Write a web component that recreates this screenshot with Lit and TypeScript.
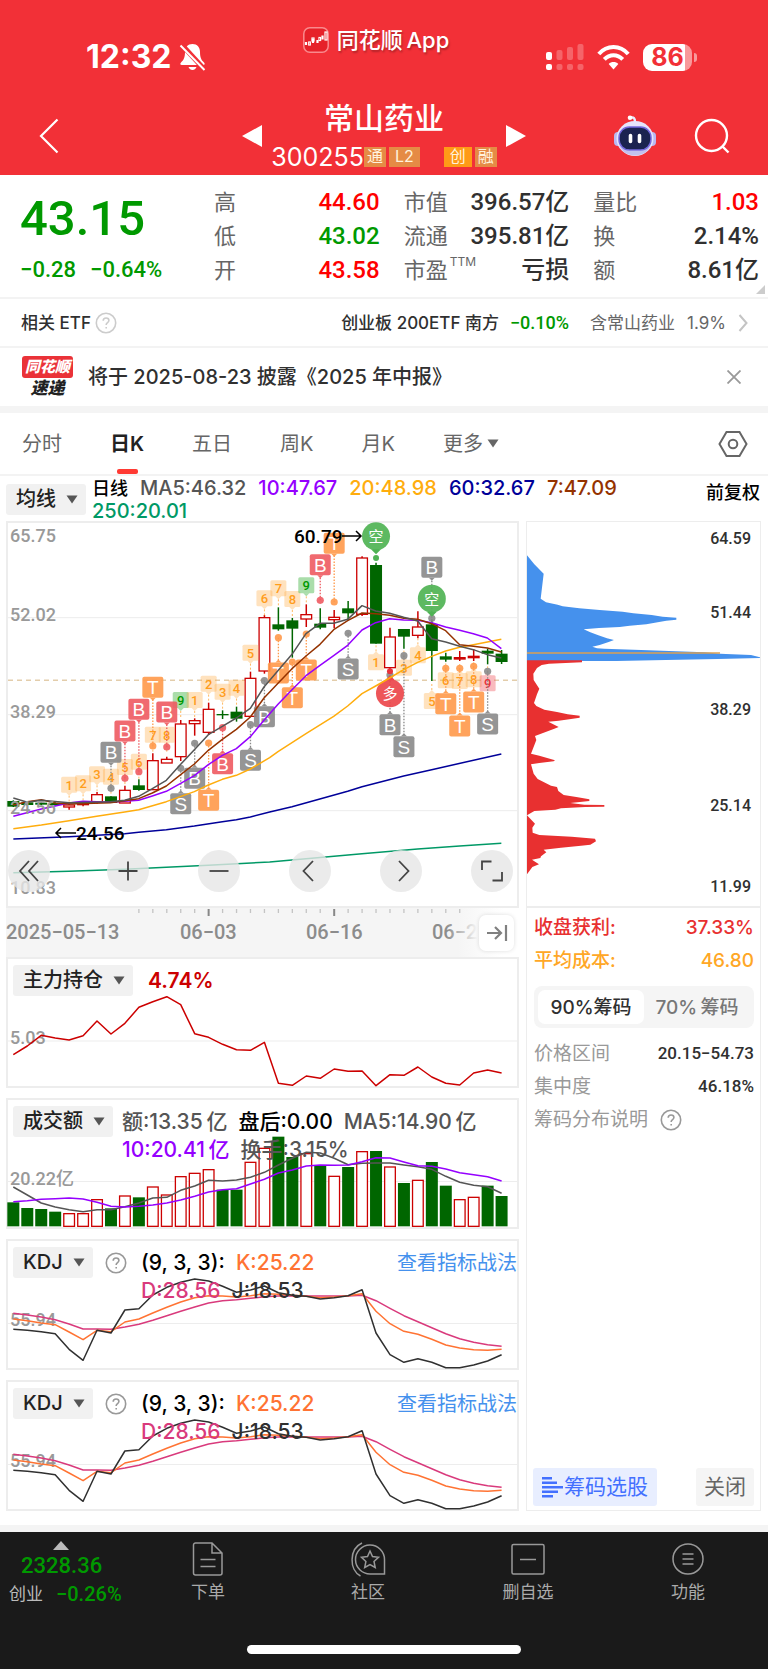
import { LitElement, html, svg, css } from "lit";
import { customElement, state } from "lit/decorators.js";
import { classMap } from "lit/directives/class-map.js";

/* Chart geometry is kept in thirds of a pixel and divided by UNIT when drawn. */
const UNIT = 3;
const STEP = 41.85;
const FIRST = 41;
const CX = (i: number) => FIRST + STEP * i;
const LEFT = 19;
const TOP = 20;

type Candle = [up: number, high: number, top: number, bottom: number, low: number];
const CANDLES: Candle[] = [
  [0, 858, 860, 877, 878], [0, 862, 864, 872, 874], [0, 864, 865, 871, 873], [0, 864, 866, 872, 874],
  [1, 869, 872, 878, 886], [1, 862, 867, 871, 876], [1, 833, 841, 864, 868], [0, 846, 846, 866, 866],
  [1, 814, 828, 866, 866], [0, 795, 813, 827, 829], [1, 717, 739, 826, 826], [1, 727, 735, 746, 746],
  [1, 617, 629, 727, 740], [1, 612, 619, 628, 664], [1, 565, 585, 654, 662], [0, 588, 599, 603, 614],
  [0, 577, 592, 613, 622], [1, 472, 492, 606, 608], [1, 302, 310, 470, 478], [0, 279, 330, 345, 349],
  [0, 311, 318, 343, 430], [1, 270, 301, 314, 338], [0, 282, 328, 340, 345], [1, 287, 309, 316, 342],
  [0, 260, 282, 297, 318], [1, 126, 131, 300, 305], [0, 145, 152, 388, 388], [1, 340, 368, 460, 468],
  [0, 344, 344, 367, 403], [1, 291, 338, 363, 372], [0, 315, 330, 410, 500], [0, 415, 426, 436, 442],
  [1, 410, 430, 434, 440], [1, 405, 426, 430, 440], [0, 403, 409, 418, 450], [0, 407, 418, 443, 449],
];

const LINES: [string, string][] = [
  ["ma250", "41,1075 208,1071 375,1065 500,1059 626,1053 810,1043 919,1033 1087,1018 1254,1004 1380,995 1505,987"],
  ["ma60", "41,974 208,967 375,958 417,954 500,946 584,935 668,922 710,916 752,908 810,893 877,877 1044,831 1087,817 1212,785 1296,766 1505,719"],
  ["ma20", "41,943 125,932 208,919 291,906 375,893 417,886 500,862 584,832 626,812 668,795 710,783 752,764 810,730 835,712 919,658 1002,606 1044,575 1087,538 1128,515 1170,491 1212,466 1254,444 1296,426 1338,410 1380,399 1421,391 1463,383 1505,375"],
  ["ma10", "41,906 125,884 208,866 250,861 332,864 417,858 458,845 500,831 543,807 584,784 626,751 668,723 710,703 752,667 793,618 835,570 877,526 919,484 961,453 1002,424 1044,393 1087,347 1128,325 1170,313 1212,317 1254,318 1296,325 1338,338 1380,348 1421,358 1463,371 1505,403"],
  ["ma7", "41,872 83,862 125,856 167,866 208,869 332,865 417,853 458,836 500,815 543,781 584,749 626,708 668,675 710,645 752,608 793,551 835,507 877,463 919,425 961,390 1002,346 1044,319 1087,296 1128,298 1170,303 1212,312 1254,315 1296,328 1338,349 1380,391 1421,396 1463,401 1505,413"],
  ["ma5", "41,851 83,864 125,858 208,865 332,862 375,858 417,846 458,823 500,798 543,750 584,706 626,661 668,636 710,611 752,582 793,518 877,420 919,358 961,327 1002,327 1044,315 1087,274 1128,290 1170,297 1212,309 1254,320 1296,373 1338,383 1380,396 1421,406 1463,421 1505,431"],
];

type Count = [i: number, y: number, n: string, tone: string, below?: boolean];
const COUNTS: Count[] = [
  [4, 811, "1", "o"], [5, 807, "2", "o"], [6, 780, "3", "o"], [7, 787, "4", "o"], [8, 758, "5", "o"],
  [9, 742, "6", "o"], [10, 661, "7", "o"], [11, 661, "8", "o"], [12, 557, "9", "g"], [13, 557, "1", "o"],
  [14, 508, "2", "o"], [15, 532, "3", "o"], [16, 520, "4", "o"], [17, 415, "5", "o"], [18, 252, "6", "o"],
  [19, 222, "7", "o"], [20, 254, "8", "o"], [21, 213, "9", "g"], [26, 444, "1", "o", true],
  [28, 460, "3", "o", true], [29, 423, "4", "o", true], [30, 560, "5", "o", true], [31, 498, "6", "o", true],
  [32, 500, "7", "o", true], [33, 495, "8", "o", true], [34, 507, "9", "r", true],
];

type Signal = [i: number, dot: number, y: number, letter: string, tone: string];
const SIGNALS: Signal[] = [
  [7, 822, 714, "B", "gray"], [8, 792, 650, "B", "red"], [9, 772, 585, "B", "red"], [10, 695, 519, "T", "orange"],
  [11, 698, 593, "B", "red"], [12, 762, 868, "S", "gray"], [13, 687, 792, "B", "gray"], [14, 686, 858, "T", "orange"],
  [15, 640, 748, "B", "red"], [17, 631, 738, "S", "gray"], [18, 499, 607, "B", "gray"], [19, 370, 476, "T", "orange"],
  [20, 443, 550, "T", "orange"], [21, 359, 467, "T", "orange"], [22, 258, 151, "B", "red"], [23, 263, 87, "T", "orange"],
  [24, 357, 464, "S", "gray"], [27, 482, 631, "B", "gray"], [28, 424, 697, "S", "gray"], [30, 312, 159, "B", "gray"],
  [31, 462, 568, "T", "orange"], [32, 462, 635, "T", "orange"], [33, 456, 563, "T", "orange"], [34, 471, 629, "S", "gray"],
];

const HOLDING = [465, 439, 407, 415, 421, 408, 364, 403, 371, 323, 306, 291, 315, 402, 413, 434, 450, 452, 428, 551, 557, 529, 536, 508, 515, 514, 558, 525, 527, 502, 532, 551, 556, 520, 511, 520];
const VOLUME = [340, 357, 360, 368, 374, 374, 332, 358, 321, 325, 294, 318, 263, 253, 242, 302, 302, 220, 178, 143, 204, 194, 229, 262, 234, 188, 186, 234, 282, 274, 219, 290, 332, 325, 290, 321];
const VOLUME_UP = [0, 0, 0, 0, 1, 1, 1, 0, 1, 0, 1, 1, 1, 1, 1, 0, 0, 1, 1, 0, 0, 1, 0, 1, 0, 1, 0, 1, 0, 1, 0, 0, 1, 1, 0, 0];
const VOLUME_MA5 = [294, 318, 342, 354, 362, 368, 362, 362, 353, 342, 327, 325, 304, 291, 274, 276, 273, 265, 250, 228, 208, 190, 192, 208, 227, 223, 222, 222, 228, 233, 241, 262, 280, 289, 293, 313];
const VOLUME_MA10 = [338, 335, 331, 329, 327, 330, 340, 352, 354, 352, 348, 342, 333, 322, 309, 302, 299, 285, 271, 252, 243, 231, 228, 229, 228, 218, 206, 207, 219, 230, 232, 240, 251, 257, 263, 276];
const KDJ_J = [299, 302, 306, 312, 359, 392, 302, 310, 241, 237, 196, 173, 158, 148, 154, 170, 188, 181, 169, 189, 197, 200, 208, 204, 198, 180, 310, 375, 398, 387, 398, 414, 414, 406, 394, 375];
const KDJ_K = [268, 273, 280, 285, 307, 330, 302, 306, 277, 268, 250, 233, 217, 204, 198, 199, 202, 198, 192, 194, 197, 200, 204, 202, 198, 192, 245, 282, 305, 314, 329, 346, 355, 360, 362, 359];
const KDJ_D = [251, 256, 262, 270, 283, 298, 298, 299, 292, 284, 272, 258, 245, 232, 220, 213, 210, 206, 201, 199, 199, 199, 199, 199, 199, 197, 213, 236, 258, 276, 294, 312, 327, 338, 345, 350];

const STATS = [
  ["高", "44.60", "up", "市值", "396.57亿", "", "量比", "1.03", "up"],
  ["低", "43.02", "down", "流通", "395.81亿", "", "换", "2.14%", ""],
  ["开", "43.58", "up", "市盈", "亏损", "", "额", "8.61亿", ""],
];

const TABS = ["分时", "日K", "五日", "周K", "月K"];

const px = (v: number, origin: number) => (v - origin) / UNIT;
const series = (values: number[], origin: number) =>
  values.map((v, i) => `${px(CX(i), LEFT).toFixed(1)},${px(v, origin).toFixed(1)}`).join(" ");

const help = html`<svg class="help" viewBox="0 0 22 22" aria-hidden="true">
  <circle cx="11" cy="11" r="9.7"></circle>
  <path d="M8.2 8.8c0-1.700 1.200-2.800 2.900-2.800 1.600 0 2.800 1 2.800 2.500 0 2-2.700 2.100-2.700 4.200v.4M11.200 15v1.400"></path>
</svg>`;

const picker = (name: string, label: string) => html`<label class="picker">
  <select aria-label=${label}><option>${name}</option></select>
  <svg viewBox="0 0 12 9" aria-hidden="true"><path d="M.5.5h11L6 8.500z"></path></svg>
</label>`;

@customElement("app-root")
export class AppRoot extends LitElement {
  @state() private tab = 1;
  @state() private share = 0;

  static styles = css`
    :host { display: block; background: #fff; color: #303030;
      font-family: Inter, "Noto Sans CJK SC", sans-serif; font-size: 20px; line-height: 24px; }
    * { box-sizing: border-box; }
    button, select { font: inherit; color: inherit; border: 0; background: none; margin: 0; padding: 0; cursor: pointer; }
    a { color: inherit; text-decoration: none; }
    svg { display: block; }
    .num { font-family: Roboto, "Noto Sans CJK SC", sans-serif; font-weight: 500; }
    .up { color: #ff0000; }
    .down { color: #009900; }

    .head { background: #f23037; color: #fff; height: 175px; }
    .status { height: 88px; padding: 26px 16px 0 0; display: grid; grid-template-columns: 1fr auto 1fr; align-items: center; }
    .clock { display: flex; align-items: center; gap: 8px; padding-left: 86px; font-size: 32px; font-weight: 700; line-height: 36px; }
    .clock svg { width: 27px; height: 28px; }
    .source { align-self: start; display: flex; align-items: center; gap: 8px; font-size: 22px; font-weight: 500; line-height: 28px; text-shadow: 1px 2px 2px #0004; }
    .source svg { width: 26px; height: 26px; }
    .radio { display: flex; justify-content: flex-end; align-items: center; gap: 13px; padding-right: 55px; }
    .bars { width: 38px; height: 26px; }
    .wifi { width: 33px; height: 25px; }
    .battery { display: flex; align-items: center; }
    .cell { width: 49px; height: 27px; border-radius: 9px; text-align: center; color: #f23037;
      background: linear-gradient(90deg, #fff 86%, #f9989b 86%); font-size: 25px; font-weight: 700; line-height: 27px; }
    .nub { width: 3px; height: 9px; margin-left: 2px; background: #f9989b; border-radius: 0 3px 3px 0; }
    .nav { height: 87px; display: grid; grid-template-columns: 1fr auto 1fr; align-items: center; padding-top: 9px; }
    .back { justify-self: start; margin-left: 38px; }
    .back svg { width: 22px; height: 36px; }
    .name { display: flex; align-items: center; }
    .name h1 { margin: 0; font-size: 30px; line-height: 36px; font-weight: 500; text-align: center; }
    .name .tri { width: 20px; height: 22px; fill: #fff; }
    .who { width: 244px; }
    .code { display: flex; justify-content: center; align-items: center; font-size: 25px; line-height: 32px; height: 32px; margin-top: 5px; }
    .tag { height: 20px; line-height: 19px; font-size: 16px; padding: 0 6px; background: #e58b45; color: #fff2dc; margin-right: 3px; }
    .tag.cut { padding: 0 3px; }
    .tag.hot { background: #ff9a17; margin-left: 21px; }
    .tag:last-child { margin-right: 0; }
    .tools { justify-self: end; display: flex; align-items: center; gap: 38px; margin-right: 38px; }
    .robot { width: 42px; height: 42px; }
    .find { width: 36px; height: 36px; }

    .quote { display: grid; grid-template-columns: 170px 1fr 1fr 1fr; column-gap: 24px;
      position: relative; padding: 10px 9px 9px 20px; border-bottom: 2px solid #f3f3f3; height: 124px; }
    .last { font-size: 49px; line-height: 68px; }
    .diff { display: flex; gap: 14px; font-size: 22px; line-height: 34px; }
    .stat { display: flex; justify-content: space-between; font-size: 22px; line-height: 34px; color: #666; }
    .stat .num { font-size: 24px; }
    .stat .num:not(.up):not(.down) { color: #303030; }
    .stat sup { font-size: 12px; line-height: 12px; vertical-align: 12px; margin-left: 2px; }
    .fold { position: absolute; right: 3px; bottom: 3px; width: 9px; height: 9px; fill: #ccc; }

    .etf { display: flex; align-items: center; height: 49px; padding: 0 20px 0 21px; border-bottom: 2px solid #f3f3f3; font-size: 17px; font-weight: 500; }
    .help { width: 22px; height: 22px; fill: none; stroke: #999; stroke-width: 1.600; }
    .etf .help { stroke: #ccc; margin-left: 4px; }
    .etf .fund { margin-left: auto; }
    .etf .num { font-size: 18px; margin: 0 21px 0 11px; }
    .etf .has { color: #666; font-weight: 400; display: flex; align-items: center; gap: 12px; }
    .etf .has svg { width: 10px; height: 18px; }
    .news { display: flex; align-items: center; height: 58px; padding: 0 22px; gap: 15px; font-size: 20px; font-weight: 500; }
    .brand { width: 51px; font-size: 17px; font-style: italic; font-weight: 900; line-height: 20px; text-align: center; color: #222; }
    .brand b { display: block; background: #ea3238; color: #fff; font-size: 15px; line-height: 22px; border-radius: 3px; }
    .brand span { display: block; }
    .news button { margin-left: auto; margin-right: 5px; }
    .news button svg { width: 14px; height: 14px; }
    .band { height: 7px; background: #f4f4f4; }

    .tabs { display: flex; height: 63px; padding: 0 20px 0 22px; border-bottom: 2px solid #f3f3f3; color: #666; gap: 48px; }
    .tabs button { position: relative; height: 61px; display: flex; align-items: center; gap: 4px; }
    .tabs .on { color: #222; font-weight: 600; }
    .tabs .on::after { content: ""; position: absolute; left: 50%; bottom: 0; width: 21px; height: 5px; margin-left: -10px; border-radius: 2px; background: #ff3a33; }
    .tabs .more svg { width: 12px; height: 9px; fill: #666; }
    .tabs .set { margin-left: auto; }
    .tabs .set svg { width: 30px; height: 30px; }

    .legend { display: flex; padding: 0 8px 0 6px; gap: 6px; height: 45px; }
    .picker { position: relative; display: block; height: 31px; border-radius: 3px; background: #f1f1f1; flex: none; }
    .picker select { appearance: none; height: 31px; line-height: 31px; padding: 0 30px 0 10px; color: #222; outline: none; font-weight: 500; }
    .picker svg { position: absolute; right: 8px; top: 11px; width: 12px; height: 9px; fill: #555; pointer-events: none; }
    .legend .picker { margin-top: 8px; }
    .legend p { margin: 0; padding-top: 1px; flex: 1; max-width: 540px; line-height: 23px; display: flex; flex-wrap: wrap; column-gap: 12px; align-content: flex-start; font-weight: 500; }
    .legend .day { font-size: 18px; color: #000; }
    .legend .adj { font-size: 18px; font-weight: 500; color: #000; line-height: 34px; height: 34px; flex: none; margin-left: auto; }
    .c5 { color: #555; } .c10 { color: #9500ff; } .c20 { color: #ffad0d; } .c60 { color: #000099; } .c7 { color: #943200; } .c250 { color: #009966; }

    .board { display: grid; grid-template-columns: 513fr 235fr; column-gap: 7px; padding: 0 7px 0 6px; margin-bottom: 14px; }
    .main { display: flex; flex-direction: column; min-width: 0; }
    .kline { position: relative; border: 2px solid #ededed; }
    .plot { width: 100%; overflow: visible; }
    .grid { stroke: #ededed; stroke-width: 1; }
    .now { stroke: #e3cdab; stroke-width: 1.500; stroke-dasharray: 5 4; }
    .axis { font-family: Roboto, "Noto Sans CJK SC", sans-serif; font-size: 18px; font-weight: 500; fill: #999; }
    .date { font-family: Roboto, sans-serif; font-size: 20px; font-weight: 500; fill: #8c8c8c; }
    .date.last-date { fill: url(#fade); }
    .mark { font-family: Roboto, sans-serif; font-size: 19px; font-weight: 500; fill: #000; }
    .arrow { fill: none; stroke: #000; stroke-width: 1.500; }
    .redk { fill: #fff; stroke: #cc0000; stroke-width: 1.300; }
    .greenk { fill: #006600; stroke: none; }
    .wickr { stroke: #cc0000; stroke-width: 1.500; }
    .wickg { stroke: #006600; stroke-width: 1.500; }
    .ln { fill: none; stroke-width: 1.500; stroke-linejoin: round; }
    .ma5 { stroke: #555; } .ma7 { stroke: #943200; } .ma10 { stroke: #9500ff; } .ma20 { stroke: #ffad0d; } .ma60 { stroke: #000099; } .ma250 { stroke: #009966; }
    .k { stroke: #ff7333; } .d { stroke: #d93a7c; } .j { stroke: #303030; } .hold { stroke: #cc0000; }
    .count { font-family: Roboto, sans-serif; font-size: 13px; font-weight: 500; text-anchor: middle; }
    .co { fill: #ff9d1c; } .cg { fill: #009900; } .cr { fill: #e8333c; }
    .bo { fill: #ffb04a; fill-opacity: .36; } .bg { fill: #55bb55; fill-opacity: .5; } .br { fill: #f0565c; fill-opacity: .4; }
    .lead { stroke: #ffb861; stroke-dasharray: 2 2; }
    .letter { font-family: "Liberation Sans", sans-serif; font-size: 19px; fill: #fff; text-anchor: middle; }
    .hanzi { font-family: "Noto Sans CJK SC", sans-serif; font-size: 15px; fill: #fff; text-anchor: middle; }
    .gray { fill: #8a8a8a; stroke: #8a8a8a; } .red { fill: #ee5a60; stroke: #ee5a60; } .orange { fill: #ff994a; stroke: #ff994a; }
    .box, .dot { stroke: none; fill-opacity: .9; }
    .dash { fill: none; stroke-width: 1.300; stroke-dasharray: 1.500 1.500; }
    .controls { position: absolute; left: 0; right: 4px; bottom: 14px; display: flex; justify-content: space-between; }
    .controls button { width: 42px; height: 42px; border-radius: 50%; background: #e6e6e6cc; display: grid; place-items: center; }
    .controls button:first-child { margin-right: 8px; }
    .controls svg { width: 24px; height: 24px; fill: none; stroke: #444; stroke-width: 1.800; }

    .timeline { position: relative; background: linear-gradient(90deg, #f5f5f5 88%, #fff 97%); height: 49px; }
    .timeline .plot { height: 49px; }
    .timeline button { position: absolute; right: 5px; top: 7px; width: 35px; height: 36px; border-radius: 7px; background: #fff; box-shadow: 0 0 4px #0002; display: grid; place-items: center; }
    .timeline button svg { width: 22px; height: 18px; }
    .tick { stroke: #c4c4c4; stroke-width: 1.300; }
    .tick.big { stroke: #888; stroke-width: 2; }

    .panel { position: relative; border: 2px solid #ededed; min-height: 131px; margin-bottom: 10px; }
    .panel:last-child { margin-bottom: 0; }
    .panel > .plot { position: absolute; left: 0; top: 0; }
    .bar { position: relative; display: flex; align-items: flex-start; padding: 6px 0 0 5px; font-weight: 500; }
    .bar p { margin: 0; flex: 1; display: flex; flex-wrap: wrap; column-gap: 11px; font-size: 21px; line-height: 28px; padding-top: 2px; }
    .bar .help { margin: 5px 0 0 12px; flex: none; }
    .bar a { color: #4591ed; line-height: 28px; padding-top: 2px; font-weight: 400; flex: none; }
    .black { color: #000; }
    .value { color: #cc0000; margin-left: 15px; font-size: 21px; line-height: 32px; font-weight: 600; }
    .vol p { margin-left: 9px; }
    .kdj p { margin-left: 14px; padding-right: 30px; }
    .kc { color: #ff7333; } .dc { color: #d93a7c; } .jc { color: #303030; }

    .side { display: flex; flex-direction: column; border: 1px solid #ededed; }
    .chips { border-bottom: 2px solid #ededed; }
    .chip { font-family: Roboto, sans-serif; font-size: 16px; font-weight: 500; fill: #303030; text-anchor: end; }
    .blue { fill: #4591ed; } .crimson { fill: #e83030; }
    .cost { stroke: #dba152; stroke-width: 1.500; }
    .facts { padding: 3px 6px 0 7px; display: flex; flex-direction: column; font-size: 19px; line-height: 33px; color: #999; }
    .row { display: flex; justify-content: space-between; align-items: center; height: 33px; }
    .row.win { color: #e83030; } .row.avg { color: #ffa726; }
    .row.win, .row.avg { font-weight: 500; }
    .row .num { color: #303030; font-size: 17px; }
    .row.note { justify-content: flex-start; gap: 12px; }
    .seg { display: grid; grid-template-columns: 1fr 1fr; background: #f5f5f5; border-radius: 8px; padding: 4px; height: 42px; margin: 9px 0; color: #777; font-weight: 500; font-size: 19px; }
    .seg .on { background: #fff; color: #303030; border-radius: 7px; }
    .acts { margin-top: auto; display: flex; justify-content: space-between; padding: 0 6px 4px; line-height: 38px; }
    .acts button { height: 38px; border-radius: 3px; padding: 0 8px; background: #f5f5f5; color: #666; font-size: 21px; }
    .acts .pick { background: #e8eeff; color: #4370ff; display: flex; align-items: center; padding: 0 9px; gap: 1px; }
    .acts .pick svg { width: 21px; height: 21px; fill: #4370ff; }

    .dock { background: #1a1a1a; color: #aaa; height: 137px; display: flex; flex-direction: column; }
    .items { display: grid; grid-template-columns: 128px repeat(4, 1fr); font-size: 17px; line-height: 24px; }
    .items > a { display: flex; flex-direction: column; align-items: center; padding-top: 9px; gap: 3px; }
    .items a > svg { width: 36px; height: 36px; fill: none; stroke: #999; stroke-width: 1.500; }
    .index { display: flex; flex-direction: column; padding: 9px 0 0 9px; color: #bbb; }
    .index .num { color: #009900; }
    .index svg { width: 16px; height: 9px; margin-left: 44px; fill: #bbb; }
    .index .big { font-size: 22px; line-height: 32px; margin-left: 12px; }
    .index div { display: flex; gap: 13px; font-size: 17px; }
    .index div .num { font-size: 20px; }
    .home { width: 274px; height: 9px; border-radius: 5px; background: #fff; margin: auto auto 15px; }
  `;

  private candle(c: Candle, i: number) {
    const [up, high, top, bottom, low] = c;
    const x = px(CX(i), LEFT);
    const w = up ? 10.7 : 12;
    const y = px(top, TOP);
    const h = (bottom - top) / UNIT;
    return svg`<line class=${up ? "wickr" : "wickg"} x1=${x} x2=${x} y1=${px(high, TOP)} y2=${px(low, TOP)}></line>
      <rect class=${up ? "redk" : "greenk"} x=${x - w / 2} y=${y} width=${w} height=${h}></rect>`;
  }

  private count([i, y, n, tone, below]: Count) {
    const x = px(CX(i), LEFT);
    const cy = px(y, TOP);
    const s = below ? -1 : 1;
    return svg`<rect class=${"b" + tone} x=${x - 8} y=${cy - 8} width="16" height="16" rx="1.500"></rect>
      <path class=${"b" + tone} d=${`M${x - 3} ${cy + 8 * s}l3 ${3 * s} 3 ${-3 * s}z`}></path>
      <line class="lead" x1=${x} x2=${x} y1=${cy + 11 * s} y2=${cy + 17 * s}></line>
      <text class=${"count c" + tone} x=${x} y=${cy + 5}>${n}</text>`;
  }

  private signal([i, dot, y, letter, tone]: Signal) {
    const x = px(CX(i), LEFT);
    const cy = px(y, TOP);
    const dy = px(dot, TOP);
    const s = dot > y ? 1 : -1;
    return svg`<line class="dash ${tone}" x1=${x} x2=${x} y1=${dy} y2=${cy + 11 * s}></line>
      <circle class="dot ${tone}" cx=${x} cy=${dy} r="3.600"></circle>
      <rect class="box ${tone}" x=${x - 10.5} y=${cy - 10.5} width="21" height="21" rx="2"></rect>
      <path class="box ${tone}" d=${`M${x - 3} ${cy + 10.5 * s}l3 ${3 * s} 3 ${-3 * s}z`}></path>
      <text class="letter" x=${x} y=${cy + 7}>${letter}</text>`;
  }

  private badge(i: number, y: number, text: string, fill: string, s: number) {
    const x = px(CX(i), LEFT);
    const cy = px(y, TOP);
    return svg`<circle cx=${x} cy=${cy} r="14" fill=${fill} fill-opacity=".92"></circle>
      <path d=${`M${x - 5} ${cy + 13 * s}l5 ${5 * s} 5 ${-5 * s}z`} fill=${fill}></path>
      <text class="hanzi" x=${x} y=${cy + 6}>${text}</text>`;
  }

  private kline() {
    return html`<section class="kline">
      <svg class="plot" viewBox="0 0 509 383" role="img" aria-label="日K线">
        <g transform="translate(-2 -2)">
          ${[310, 601, 889].map((y) => svg`<line class="grid" x1="2" x2="511" y1=${px(y, TOP)} y2=${px(y, TOP)}></line>`)}
          <line class="now" x1="2" x2="511" y1=${px(498, TOP)} y2=${px(498, TOP)}></line>
          ${CANDLES.map((c, i) => this.candle(c, i))}
          ${COUNTS.map((c) => this.count(c))}
          ${SIGNALS.map((s) => this.signal(s))}
          <circle cx=${px(CX(26), LEFT)} cy=${px(131, TOP)} r="3" fill="#4fb354"></circle>
          <circle cx=${px(CX(27), LEFT)} cy=${px(471, TOP)} r="3" fill="#e8333c"></circle>
          ${this.badge(26, 66, "空", "#4fb354", 1)}
          ${this.badge(30, 253, "空", "#4fb354", 1)}
          ${this.badge(27, 537, "多", "#ec464b", -1)}
          <g transform=${`scale(${1 / UNIT}) translate(${-LEFT} ${-TOP})`}>
            ${LINES.map(([name, points]) => svg`<polyline class="ln ${name}" points=${points} vector-effect="non-scaling-stroke"></polyline>`)}
          </g>
          ${[["65.75", 62], ["52.02", 298], ["38.29", 589], ["24.56", 879], ["10.83", 1117]].map(
            ([t, y]) => svg`<text class="axis" x="4" y=${px(y as number, TOP) + 7}>${t}</text>`)}
          <path class="arrow" d="M336 15h19m-5-5 5 5-5 5"></path>
          <text class="mark" x="288" y="22">60.79</text>
          <path class="arrow" d="M70 312H50m5-5-5 5 5 5"></path>
          <text class="mark" x="70" y="319">24.56</text>
        </g>
      </svg>
      <div class="controls">
        <button aria-label="更早"><svg viewBox="0 0 24 24"><path d="M12 2 3 12l9 10M21 2l-9 10 9 10"></path></svg></button>
        <button aria-label="放大"><svg viewBox="0 0 24 24"><path d="M2.500 12h19M12 2.500v19"></path></svg></button>
        <button aria-label="缩小"><svg viewBox="0 0 24 24"><path d="M2.500 12h19"></path></svg></button>
        <button aria-label="向左"><svg viewBox="0 0 24 24"><path d="m15 2-9.500 10L15 22"></path></svg></button>
        <button aria-label="向右"><svg viewBox="0 0 24 24"><path d="m10 2 9.500 10L10 22"></path></svg></button>
        <button aria-label="全屏"><svg viewBox="0 0 24 24"><path d="M2 11V2.500h9.500M22 13v8.500h-9.500"></path></svg></button>
      </div>
    </section>`;
  }

  private timeline() {
    const ticks = Array.from({ length: 24 }, (_, n) => n + 9);
    return html`<div class="timeline">
      <svg class="plot" viewBox="0 0 513 49" preserveAspectRatio="xMinYMin meet">
        <defs><linearGradient id="fade" gradientUnits="userSpaceOnUse" x1="440" x2="472" y1="0" y2="0">
          <stop offset="0" stop-color="#8c8c8c"></stop><stop offset="1" stop-color="#8c8c8c" stop-opacity="0"></stop>
        </linearGradient></defs>
        ${ticks.map((i) => {
          const x = px(CX(i), LEFT);
          const big = i === 14 || i === 23;
          return svg`<line class=${classMap({ tick: true, big })} x1=${x} x2=${x} y1="1" y2=${big ? 8 : 5}></line>`;
        })}
        <text class="date" x="0" y="31">2025−05−13</text>
        <text class="date" x="174" y="31">06−03</text>
        <text class="date" x="300" y="31">06−16</text>
        <text class="date last-date" x="426" y="31">06−2</text>
      </svg>
      <button aria-label="最新"><svg viewBox="0 0 22 18" fill="none" stroke="#808080" stroke-width="2.200"><path d="M1 9h14M9 3l6 6-6 6M20 1v16"></path></svg></button>
    </div>`;
  }

  private kdj() {
    return html`<section class="panel kdj">
      <svg class="plot" viewBox="0 0 509 127">
        <g transform="translate(-2 -2)">
          <line class="grid" x1="2" x2="511" y1="84.500" y2="84.500"></line>
          <text class="axis" x="4" y="87">55.94</text>
          <polyline class="ln d" points=${series(KDJ_D, 28)}></polyline>
          <polyline class="ln k" points=${series(KDJ_K, 28)}></polyline>
          <polyline class="ln j" points=${series(KDJ_J, 28)}></polyline>
        </g>
      </svg>
      <div class="bar">
        ${picker("KDJ", "副图指标")}${help}
        <p><span class="black">(9, 3, 3):</span><span class="kc">K:25.22</span><span class="dc">D:28.56</span><span class="jc">J:18.53</span></p>
        <a href="#tips">查看指标战法</a>
      </div>
    </section>`;
  }

  render() {
    return html`
      <header class="head">
        <div class="status">
          <div class="clock">12:32
            <svg viewBox="0 0 27 28" fill="#fff"><path d="M13.500 1c-4.800 0-7.500 3.500-7.500 8 0 6-1.500 8-4 10.500-1.300 1.300-.7 2.500.8 2.500h21.400c1.500 0 2.100-1.200.8-2.500-2.500-2.500-4-4.500-4-10.500 0-4.500-2.700-8-7.500-8zM9.500 24c.8 2 2.200 3 4 3s3.200-1 4-3z"></path><path d="M3 2l22 24" stroke="#f23037" stroke-width="5"></path><path d="M1.500 2.500 25.500 27" stroke="#fff" stroke-width="2"></path></svg>
          </div>
          <div class="source">
            <svg viewBox="0 0 26 26"><rect x=".8" y=".8" width="24.400" height="24.400" rx="6" fill="#e62129" stroke="#f98a8d" stroke-width="1.500"></rect><path d="M3 15v3M10 12v4M14.500 13v3M19.500 8.500v4" stroke="#fff" stroke-width="2.200"></path><g fill="none" stroke="#fff" stroke-width="1.200"><rect x="5.700" y="15" width="1.600" height="3"></rect><rect x="9" y="11" width="2" height="3"></rect><rect x="16" y="10.500" width="1.600" height="3"></rect><rect x="22" y="5" width="2" height="8"></rect></g></svg>
            <span>同花顺&#8201;App</span>
          </div>
          <div class="radio">
            <svg class="bars" viewBox="0 0 38 26" fill="#fff"><g><rect x="0" y="8" width="6" height="8" rx="2"></rect><rect x="0" y="20" width="6" height="6" rx="2"></rect></g><g opacity=".25"><rect x="10.500" y="6" width="6" height="10" rx="2"></rect><rect x="21" y="3" width="6" height="13" rx="2"></rect><rect x="31.500" y="0" width="6" height="16" rx="2"></rect><rect x="10.500" y="20" width="6" height="6" rx="2"></rect><rect x="21" y="20" width="6" height="6" rx="2"></rect><rect x="31.500" y="20" width="6" height="6" rx="2"></rect></g></svg>
            <svg class="wifi" viewBox="0 0 33 25" fill="none" stroke="#fff" stroke-width="4"><path d="M1.800 9C10-0.300 23-.3 31.200 9M7.300 14.300c5.200-5.500 13.200-5.500 18.400 0"></path><path d="M16.500 24.500l-4.800-5.500c2.600-2.600 7-2.600 9.600 0z" fill="#fff" stroke="none"></path></svg>
            <div class="battery"><div class="cell">86</div><div class="nub"></div></div>
          </div>
        </div>
        <div class="nav">
          <button class="back" aria-label="返回"><svg viewBox="0 0 22 36" fill="none" stroke="#fff" stroke-width="2.200"><path d="M19.500 1.500 3 18l16.500 16.500"></path></svg></button>
          <div class="name">
            <button aria-label="上一只"><svg class="tri" viewBox="0 0 20 22"><path d="M20 0v22L0 11z"></path></svg></button>
            <div class="who">
              <h1>常山药业</h1>
              <div class="code"><span>300255</span><span class="tag cut">通</span><span class="tag">L2</span><span class="tag hot">创</span><span class="tag cut">融</span></div>
            </div>
            <button aria-label="下一只"><svg class="tri" viewBox="0 0 20 22"><path d="M0 0v22l20-11z"></path></svg></button>
          </div>
          <div class="tools">
            <button aria-label="智能助手"><svg class="robot" viewBox="0 0 42 42"><path d="M21 7c0-4-1.500-5-4-4.500" fill="none" stroke="#e8eaff" stroke-width="2.500"></path><circle cx="16" cy="2.800" r="2.300" fill="#fff"></circle><rect x="0" y="17" width="8" height="14" rx="4" fill="#b9b8f2"></rect><rect x="34" y="17" width="8" height="14" rx="4" fill="#b9b8f2"></rect><ellipse cx="21" cy="23.500" rx="18.500" ry="17.500" fill="#e6e4fb"></ellipse><path d="M5 30c7 8 25 8 32 0-3 7-9 10.500-16 10.500S8 37 5 30z" fill="#c3c0ee"></path><rect x="5" y="12" width="32" height="23" rx="10.500" fill="#1b2350" stroke="#7468dd" stroke-width="1.500"></rect><path d="M16.500 20.500v6M25.500 20.500v6" stroke="#fff" stroke-width="3.600" stroke-linecap="round"></path></svg></button>
            <button aria-label="搜索"><svg class="find" viewBox="0 0 36 36" fill="none" stroke="#fff" stroke-width="2.400"><circle cx="17.500" cy="17.500" r="15.500"></circle><path d="m28 28 6.500 6.500"></path></svg></button>
          </div>
        </div>
      </header>

      <section class="quote">
        <div class="down num"><div class="last">43.15</div><div class="diff"><span>−0.28</span><span>−0.64%</span></div></div>
        ${[0, 3, 6].map((c) => html`<div>${STATS.map((r) => html`<div class="stat"><span>${r[c]}${r[c] === "市盈" ? html`<sup>TTM</sup>` : ""}</span><span class="num ${r[c + 2]}">${r[c + 1]}</span></div>`)}</div>`)}
        <svg class="fold" viewBox="0 0 9 9"><path d="M9 0v9H0z"></path></svg>
      </section>

      <section class="etf">
        <span>相关 ETF</span>${help}
        <span class="fund">创业板 200ETF 南方</span><span class="num down">−0.10%</span>
        <a class="has" href="#etf"><span>含常山药业</span><span>1.9%</span>
          <svg viewBox="0 0 10 18" fill="none" stroke="#c4c4c4" stroke-width="2"><path d="m1.500 1 7 8-7 8"></path></svg></a>
      </section>
      <section class="news">
        <div class="brand"><b>同花顺</b><span>速递</span></div>
        <a href="#report">将于 2025-08-23 披露《2025 年中报》</a>
        <button aria-label="关闭提示"><svg viewBox="0 0 14 14" stroke="#999" stroke-width="1.800"><path d="m.5.5 13 13M13.500.5l-13 13"></path></svg></button>
      </section>
      <div class="band"></div>

      <nav class="tabs">
        ${TABS.map((t, i) => html`<button class=${classMap({ on: this.tab === i })} @click=${() => (this.tab = i)}>${t}</button>`)}
        <button class="more">更多<svg viewBox="0 0 12 9"><path d="M.5.5h11L6 8.500z"></path></svg></button>
        <button class="set" aria-label="设置"><svg viewBox="0 0 30 30" fill="none" stroke="#666" stroke-width="2"><path d="M8.500 3h13L28.500 15l-7 12h-13L1.500 15z"></path><circle cx="15" cy="15" r="4.300"></circle></svg></button>
      </nav>

      <div class="legend">
        ${picker("均线", "主图指标")}
        <p><span class="day">日线</span><span class="c5">MA5:46.32</span><span class="c10">10:47.67</span><span class="c20">20:48.98</span><span class="c60">60:32.67</span><span class="c7">7:47.09</span><span class="c250">250:20.01</span></p>
        <button class="adj">前复权</button>
      </div>

      <main class="board">
        <div class="main">
          ${this.kline()}
          ${this.timeline()}
          <section class="panel">
            <svg class="plot" viewBox="0 0 509 127">
              <g transform="translate(-2 -2)">
                <line class="grid" x1="2" x2="511" y1="84" y2="84"></line>
                <text class="axis" x="4" y="87">5.03</text>
                <polyline class="ln hold" points=${series(HOLDING, 172)}></polyline>
              </g>
            </svg>
            <div class="bar">${picker("主力持仓", "副图指标")}<span class="value">4.74%</span></div>
          </section>
          <section class="panel vol">
            <svg class="plot" viewBox="0 0 509 127">
              <g transform="translate(-2 -2)">
                <line class="grid" x1="2" x2="511" y1="83.500" y2="83.500"></line>
                ${VOLUME.map((v, i) => {
                  const up = VOLUME_UP[i] === 1;
                  const w = up ? 10.7 : 12;
                  return svg`<rect class=${up ? "redk" : "greenk"} x=${px(CX(i), LEFT) - w / 2} y=${px(v, 27)} width=${w} height=${(412 - v) / UNIT}></rect>`;
                })}
                <text class="axis" x="4" y="87">20.22亿</text>
                <polyline class="ln ma5" points=${series(VOLUME_MA5, 27)}></polyline>
                <polyline class="ln ma10" points=${series(VOLUME_MA10, 27)}></polyline>
              </g>
            </svg>
            <div class="bar">${picker("成交额", "副图指标")}
              <p><span class="c5">额:13.35&#8201;亿</span><span class="black">盘后:0.00</span><span class="c5">MA5:14.90&#8201;亿</span><span class="c10">10:20.41&#8201;亿</span><span class="c5">换手:3.15%</span></p>
            </div>
          </section>
          ${this.kdj()}
          ${this.kdj()}
        </div>

        <aside class="side">
          <div class="chips">
            <svg class="plot" viewBox="0 0 233 384">
              <g transform="scale(.33333) translate(-38 -23)">
                <path class="blue" d="M38 123 60 150 88 178 79 253 95 264 130 271 145 276 195 282 256 287 325 292 357 297 412 302 445 307 486 310V316L456 319 430 324 396 330 346 334 316 338 254 341 208 345 228 354 252 363 278 372 299 377 283 383 256 392 234 397 248 402 270 403 402 408 485 411 570 414 618 418 635 419 710 422 737 429V431L610 434 455 437 307 440 200 440H38z"></path>
                <path class="crimson" d="M38 438H203V444L104 448 82 452 68 461 57 478 58 497 75 523 68 540 59 566 66 575 90 586 128 593 160 600 196 604V610L165 615 133 619 102 622 133 638 120 643 62 665 66 677 50 718 75 724 122 738 118 741 75 746 50 750 58 778 70 794 110 814 128 818 132 830 148 842 186 848 225 855V860L168 866 210 871 270 872V877L213 878 140 882 123 886 60 890 38 903 62 928 54 940 55 955 75 962 172 967 242 973 245 981 228 991 200 994 140 1000 88 1006 96 1014 80 1026 78 1031 53 1036 74 1050 54 1058 38 1080z"></path>
              </g>
              <line class="cost" x1="0" x2="193" y1="131" y2="131"></line>
              ${[["64.59", 22], ["51.44", 96], ["38.29", 193], ["25.14", 289], ["11.99", 370]].map(([t, y]) => svg`<text class="chip" x="224" y=${y}>${t}</text>`)}
            </svg>
          </div>
          <div class="facts">
            <div class="row win"><span>收盘获利:</span><span>37.33%</span></div>
            <div class="row avg"><span>平均成本:</span><span>46.80</span></div>
            <div class="seg">
              ${["90%筹码", "70%\u2009筹码"].map((t, i) => html`<button class=${classMap({ on: this.share === i })} @click=${() => (this.share = i)}>${t}</button>`)}
            </div>
            <div class="row"><span>价格区间</span><span class="num">20.15−54.73</span></div>
            <div class="row"><span>集中度</span><span class="num">46.18%</span></div>
            <div class="row note"><span>筹码分布说明</span>${help}</div>
          </div>
          <div class="acts">
            <button class="pick"><svg viewBox="0 0 21 21"><path d="M0 0h10v2.500H0zM0 4.500h15V7H0zM0 9h21v2.500H0zM0 13.500h16V16H0zM0 18h11v2.500H0z"></path></svg>筹码选股</button>
            <button>关闭</button>
          </div>
        </aside>
      </main>
      <div class="band"></div>

      <footer class="dock">
        <div class="items">
          <div class="index">
            <svg viewBox="0 0 16 9"><path d="M8 0l8 9H0z"></path></svg>
            <span class="num big">2328.36</span>
            <div><span>创业</span><span class="num">−0.26%</span></div>
          </div>
          <a href="#order"><svg viewBox="0 0 36 36"><path d="M3.500 4a2 2 0 0 1 2-2H22l10 10v20a2 2 0 0 1-2 2H5.500a2 2 0 0 1-2-2zM22 2v10h10M10.500 18.500h15M10.500 25.500h15"></path></svg>下单</a>
          <a href="#club"><svg viewBox="0 0 36 36"><path d="M34.500 33H20.500A14.500 14.500 0 1 1 34.500 18.500zM12 2C-1 8-1 29 10.500 35"></path><path d="m20 10 2.500 5.600 6 .7-4.500 4.200 1.200 6L20 23.500l-5.300 3 1.200-6-4.400-4.200 6-.7z"></path></svg>社区</a>
          <a href="#watch"><svg viewBox="0 0 36 36"><rect x="2" y="3.500" width="32" height="29.500" rx="1.500"></rect><path d="M10 18.500h16"></path></svg>删自选</a>
          <a href="#more"><svg viewBox="0 0 36 36"><circle cx="18" cy="18" r="15"></circle><path d="M12.500 13h11M12.500 18h11M12.500 23h11"></path></svg>功能</a>
        </div>
        <div class="home"></div>
      </footer>
    `;
  }
}
